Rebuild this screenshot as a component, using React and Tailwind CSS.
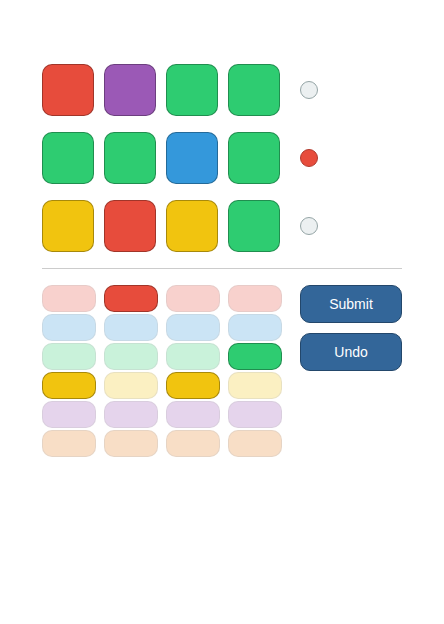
const COLORS = {
  red: "bg-[#e74c3c]",
  purple: "bg-[#9b59b6]",
  green: "bg-[#2ecc71]",
  blue: "bg-[#3498db]",
  yellow: "bg-[#f1c40f]",
  orange: "bg-[#e67e22]",
};

const guesses = [
  { pegs: ["red", "purple", "green", "green"], hit: false },
  { pegs: ["green", "green", "blue", "green"], hit: true },
  { pegs: ["yellow", "red", "yellow", "green"], hit: false },
];

const palette = ["red", "blue", "green", "yellow", "purple", "orange"];
const current = ["yellow", "red", "yellow", "green"];

const Peg = ({ color }) => (
  <div
    className={`w-[52px] h-[52px] rounded-[10px] border border-black/30 ${COLORS[color]}`}
  />
);

export default function App() {
  return (
    <div
      className="w-[444px] h-[624px] bg-white pl-[42px] pt-[64px]"
      style={{ fontFamily: '"Liberation Sans", Arial, sans-serif' }}
    >
      {/* Board */}
      <div className="flex flex-col gap-4">
        {guesses.map((g, i) => (
          <div key={i} className="flex items-center gap-[10px]">
            {g.pegs.map((c, j) => (
              <Peg key={j} color={c} />
            ))}
            <div
              className={`ml-[10px] w-[18px] h-[18px] rounded-full border ${
                g.hit
                  ? "bg-[#e74c3c] border-[#b03a2e]"
                  : "bg-[#ecf0f1] border-[#95a5a6]"
              }`}
            />
          </div>
        ))}
      </div>

      <div className="w-[360px] my-4 border-t border-[#cccccc]" />

      {/* Palette + actions */}
      <div className="flex items-start">
        <div className="grid grid-cols-4 gap-x-[8px] gap-y-[2px]">
          {palette.map((color) =>
            current.map((sel, j) => (
              <div
                key={color + j}
                className={`w-[54px] h-[27px] rounded-[10px] border border-black/30 ${
                  COLORS[color]
                } ${sel === color ? "" : "opacity-25"}`}
              />
            ))
          )}
        </div>

        <div className="ml-[18px] flex flex-col gap-[10px]">
          <button className="w-[102px] h-[38px] rounded-[10px] bg-[#336699] border border-[#23476b] text-white text-sm">
            Submit
          </button>
          <button className="w-[102px] h-[38px] rounded-[10px] bg-[#336699] border border-[#23476b] text-white text-sm">
            Undo
          </button>
        </div>
      </div>
    </div>
  );
}
